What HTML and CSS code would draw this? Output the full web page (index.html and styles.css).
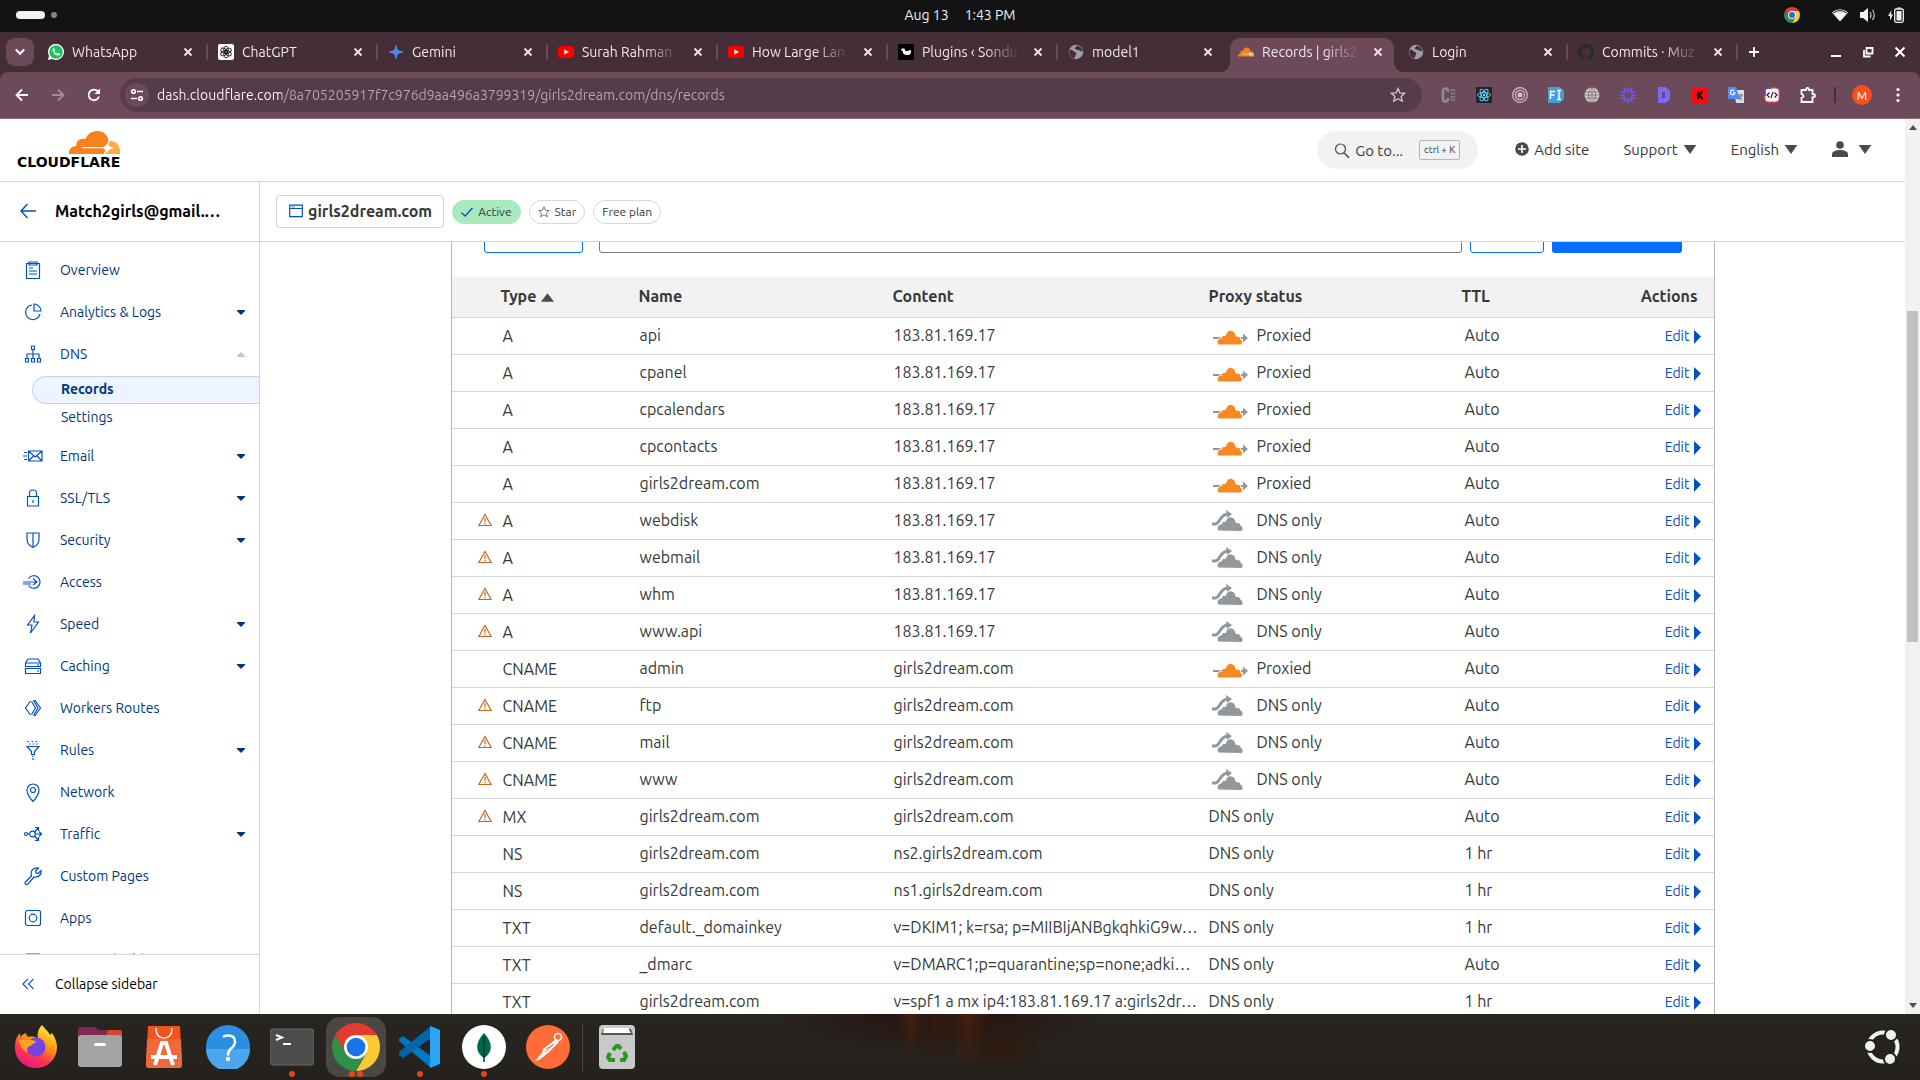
FILE: index.html
```html
<!DOCTYPE html>
<html lang="en">
<head>
<meta charset="utf-8">
<meta name="viewport" content="width=device-width, initial-scale=1">
<title>Records | girls2dream.com</title>
<link rel="stylesheet" href="styles.css">
</head>
<body>
<svg class="sprite" aria-hidden="true">
  <symbol id="x" viewBox="0 0 10 10"><path d="M1.5 1.5l7 7m0-7l-7 7" stroke="currentColor" stroke-width="1.8" fill="none"/></symbol>
  <symbol id="chrome" viewBox="4 4 40 40"><path fill="#e33b2e" d="M24 24V14H41.3A20 20 0 0 0 6.7 14L15.3 29z"/><path fill="#fcc934" d="M24 24V14H41.3A20 20 0 0 1 24 44L32.7 29z"/><path fill="#2d9147" d="M24 24L32.7 29 24 44A20 20 0 0 1 6.7 14L15.3 29z"/><circle cx="24" cy="24" r="10" fill="#fff"/><circle cx="24" cy="24" r="7.8" fill="#1a73e8"/></symbol>
  <symbol id="youtube" viewBox="0 0 16 16"><rect y="2" width="16" height="12" rx="3" fill="#f00"/><path d="M6.3 5.4v5.2L11 8z" fill="#fff"/></symbol>
  <symbol id="globe" viewBox="0 0 16 16"><circle cx="8" cy="8" r="7.2" fill="#9aa0a6"/><path d="M2 5.5c2 .2 3 1 4.500 2.600 1.500.4 2.500 1 1.500 2.400-.8 1-1 2-1.500 4C3 13.500 1 11 1.300 7.500zM8.500 2.500c-1.500 1-2.500 1.500-1.500 2.500 1.500.2 1.800 1.200 3.500 1 1.500.5 2 1.500 4 1.500-.3-3-2.500-5.500-6-6z" fill="#452e38"/></symbol>
  <symbol id="cf" viewBox="0 0 50 28"><path fill="#f6821f" d="M0 28c-.4-5.500 2.500-9.500 7.300-9.600C6.300 12 11 8.500 16 9.800 18.500 3.500 22.500 0 27.500 0c6.300 0 11 5.200 11 11.500 0 3-.6 5-1.300 6.900L34 28z"/><path fill="#fbad41" d="M40 12c6.500 0 11 7 10 16H35.500l2.500-7.500z"/><path fill="#fff" d="M13 19.600h20c2.500-.4 3.600-2.600 4.500-5 .9 3.600 2.300 5.200 7.500 6-4.300.6-6.600 2.200-7.500 6.400-.9-3.800-2.500-5.400-5-5.900H13z"/></symbol>
  <symbol id="down" viewBox="0 0 14 10"><path d="M0 0h14L7 10z" fill="currentColor"/></symbol>
  <symbol id="caret" viewBox="0 0 8 5"><path d="M0 0h8v1L4 5 0 1z" fill="currentColor"/></symbol>
  <symbol id="warn" viewBox="0 0 14 14"><path d="M7 1.500L13.200 12.500H.8z" fill="none" stroke="#c9651b" stroke-width="1.200"/><path d="M7 5v4M7 10v1.500" stroke="#c9651b" stroke-width="1.200"/></symbol>
  <symbol id="on" viewBox="0 0 40 24"><path d="M4 12h30v-3.500l5 4.500-5 4.500V14H4z" fill="#92979b"/><path d="M9 20c-2-3 0-7 3.500-7 .2-2 1.800-3 4-2.500C17.500 6.500 20 5 22.500 5.500c3 .6 4 3 4.500 5.500 3-.2 5 1 4.800 3.500 2.200.6 2 4.500.2 5.500z" fill="#f6891f" stroke="#fff"/></symbol>
  <symbol id="off" viewBox="0 0 40 24"><path d="M3 14h3c5 0 5-9.500 12-9.800h1" fill="none" stroke="#92979b" stroke-width="3"/><path d="M17 0l6 4-5 4.500z" fill="#92979b"/><path d="M9 21c-2-3 0-7 3.500-7 .2-2 1.800-3 4-2.500C17.500 7.500 20 6.500 22.500 7c3 .6 4 3 4.500 5.500 3-.2 5 1 4.800 3 3 .5 3 6 .2 6z" fill="#92979b" stroke="#fff"/></symbol>
  <symbol id="right" viewBox="0 0 8 14"><path d="M0 0l7 6.500L0 14z" fill="currentColor"/></symbol>
</svg>

<header class="topbar">
  <button class="spaces" aria-label="Activities"><span class="space-on"></span><span class="space"></span></button>
  <button class="clock"><span>Aug 13</span><span>1:43 PM</span></button>
  <div class="tray">
    <svg class="tray-chrome" viewBox="0 0 16 16"><use href="#chrome"/></svg>
    <svg viewBox="0 0 16 16"><path d="M0 5.500Q8-1 16 5.500L8 14.500z" fill="#f2f2f2"/><path d="M1.500 6Q8 1 14.500 6" fill="none" stroke="#131313"/></svg>
    <svg viewBox="0 0 16 16"><path d="M0 5h3l5-4v14l-5-4H0z" fill="#f2f2f2"/><path d="M10 5q2 3 0 6M12.500 3q3.500 5 0 10" stroke="#bbb" stroke-width="1.300" fill="none"/></svg>
    <svg viewBox="0 0 16 16"><path d="M3.500 3L0 9h2v4.500L5 7.500H3z" fill="#f2f2f2"/><rect x="6.700" y="2" width="8.600" height="13.300" rx="1.500" fill="none" stroke="#f2f2f2" stroke-width="1.300"/><path d="M9 .5h4v1H9zM8.500 4h5v9.500h-5z" fill="#f2f2f2"/></svg>
  </div>
</header>

<div class="tabstrip">
  <button class="tab-search" aria-label="Search tabs"><svg viewBox="0 0 10 10"><path d="M1.500 3L5 6.500 8.500 3" fill="none" stroke="#fff" stroke-width="1.800"/></svg></button>
  <div class="tabs">
    <div class="tab"><svg class="fav" viewBox="0 0 16 16"><path d="M0 16l1-4.200A8 8 0 1 1 4.300 15z" fill="#fff"/><circle cx="8" cy="8" r="6.800" fill="#1fc15b"/><path d="M5.200 4c-2.500 2.500 2.800 9 6.300 7.300 1.200-.8.800-1.800-1.500-2.500l-1 1C7.500 9.300 6.500 8 6.300 7.200l.8-1C6.500 4 6 3.700 5.200 4z" fill="#fff"/></svg><span class="title">WhatsApp</span><button class="close" aria-label="Close"><svg><use href="#x"/></svg></button></div>
    <div class="tab"><svg class="fav" viewBox="0 0 16 16"><rect width="16" height="16" rx="2" fill="#fff"/><g fill="none" stroke="#222" stroke-width=".9"><ellipse cx="8" cy="5.700" rx="2.300" ry="3.500"/><ellipse cx="8" cy="5.700" rx="2.300" ry="3.500" transform="rotate(60 8 8)"/><ellipse cx="8" cy="5.700" rx="2.300" ry="3.500" transform="rotate(120 8 8)"/><ellipse cx="8" cy="5.700" rx="2.300" ry="3.500" transform="rotate(180 8 8)"/><ellipse cx="8" cy="5.700" rx="2.300" ry="3.500" transform="rotate(240 8 8)"/><ellipse cx="8" cy="5.700" rx="2.300" ry="3.500" transform="rotate(300 8 8)"/></g></svg><span class="title">ChatGPT</span><button class="close" aria-label="Close"><svg><use href="#x"/></svg></button></div>
    <div class="tab"><svg class="fav" viewBox="0 0 16 16"><defs><linearGradient id="gem"><stop stop-color="#8a7bd0"/><stop offset=".5" stop-color="#4285f4"/><stop offset="1" stop-color="#45b2d8"/></linearGradient></defs><path d="M8 1.500Q8.500 7.500 14.500 8 8.500 8.500 8 14.500 7.500 8.500 1.500 8 7.500 7.500 8 1.500z" fill="url(#gem)" stroke="url(#gem)"/></svg><span class="title">Gemini</span><button class="close" aria-label="Close"><svg><use href="#x"/></svg></button></div>
    <div class="tab"><svg class="fav"><use href="#youtube"/></svg><span class="title">Surah Rahman</span><button class="close" aria-label="Close"><svg><use href="#x"/></svg></button></div>
    <div class="tab"><svg class="fav"><use href="#youtube"/></svg><span class="title">How Large Lan</span><button class="close" aria-label="Close"><svg><use href="#x"/></svg></button></div>
    <div class="tab"><svg class="fav" viewBox="0 0 16 16"><path d="M0 0h16v16H0z" fill="#000"/><path d="M3 6l1-1.500h2.500l.8 2.500h2L13 6c.5 3-1 5-3.500 5C6 11 4.500 9.500 5 7.500z" fill="#fff"/></svg><span class="title">Plugins ‹ Sondu</span><button class="close" aria-label="Close"><svg><use href="#x"/></svg></button></div>
    <div class="tab"><svg class="fav"><use href="#globe"/></svg><span class="title">model1</span><button class="close" aria-label="Close"><svg><use href="#x"/></svg></button></div>
    <div class="tab active"><svg class="fav"><use href="#cf"/></svg><span class="title">Records | girls2</span><button class="close" aria-label="Close"><svg><use href="#x"/></svg></button></div>
    <div class="tab"><svg class="fav"><use href="#globe"/></svg><span class="title">Login</span><button class="close" aria-label="Close"><svg><use href="#x"/></svg></button></div>
    <div class="tab"><svg class="fav" viewBox="0 0 16 16"><path fill="#24292e" d="M8 0a8 8 0 0 0-2.500 15.600c.4.100.500-.2.500-.4v-1.400c-2.200.5-2.700-1-2.700-1-.4-.9-.9-1.200-.9-1.200-.7-.5.100-.5.100-.5.800.1 1.200.8 1.200.8.700 1.300 1.900.9 2.300.7.100-.5.300-.9.500-1.100-1.800-.2-3.600-.9-3.600-4 0-.9.300-1.600.8-2.100-.1-.2-.4-1 .1-2.100 0 0 .7-.2 2.200.8a7.600 7.600 0 0 1 4 0c1.500-1 2.200-.8 2.200-.8.400 1.100.2 1.900.1 2.100.5.600.8 1.300.8 2.100 0 3.100-1.900 3.700-3.700 3.900.3.300.6.800.6 1.500v2.200c0 .2.100.500.600.4A8 8 0 0 0 8 0z"/></svg><span class="title">Commits · Muz</span><button class="close" aria-label="Close"><svg><use href="#x"/></svg></button></div>
  </div>
  <button class="icon-btn new-tab" aria-label="New tab"><svg viewBox="0 0 12 12"><path d="M6 1v10M1 6h10" stroke="#fff" stroke-width="1.800"/></svg></button>
  <div class="window-controls">
    <button class="icon-btn" aria-label="Minimize"><svg viewBox="0 0 12 12"><path d="M1 10h10" stroke="#fff" stroke-width="2"/></svg></button>
    <button class="icon-btn" aria-label="Restore"><svg viewBox="0 0 12 12"><path d="M4.500 2h6v5.500h-6zM2 4v6.500h6.500" fill="none" stroke="#fff" stroke-width="1.800"/></svg></button>
    <button class="icon-btn" aria-label="Close window"><svg viewBox="0 0 12 12"><path d="M1.500 1.500l9 9m0-9l-9 9" stroke="#fff" stroke-width="2"/></svg></button>
  </div>
</div>

<div class="toolbar">
  <button class="nav-btn" aria-label="Back"><svg viewBox="0 0 16 16"><path d="M14 8H3m5-5.500L2.500 8 8 13.500" fill="none" stroke="#fff" stroke-width="1.800"/></svg></button>
  <button class="nav-btn" aria-label="Forward"><svg viewBox="0 0 16 16"><path d="M2 8h11M8 2.500L13.500 8 8 13.500" fill="none" stroke="#a58a97" stroke-width="1.800"/></svg></button>
  <button class="nav-btn" aria-label="Reload"><svg viewBox="0 0 16 16"><path d="M13 9.500A5.300 5.300 0 1 1 12 4.500" fill="none" stroke="#fff" stroke-width="1.800"/><path d="M14 1.500v5.500H8.500z" fill="#fff"/></svg></button>
  <div class="omnibox">
    <button class="site-info" aria-label="Site information"><svg viewBox="0 0 14 14"><g fill="none" stroke="#fff" stroke-width="1.600"><circle cx="3.500" cy="3.500" r="1.800"/><circle cx="10.500" cy="10.500" r="1.800"/><path d="M7 3.500h6M1 10.500h6"/></g></svg></button>
    <input class="url" type="text" aria-label="Address" value="dash.cloudflare.com/8a705205917f7c976d9aa496a3799319/girls2dream.com/dns/records">
    <button class="icon-btn" aria-label="Bookmark"><svg class="s16" viewBox="0 0 16 16"><path d="M8 1.500l1.900 4.400 4.800.4-3.600 3.200 1.100 4.700L8 11.700l-4.200 2.500 1.100-4.700L1.300 6.300l4.800-.4z" fill="none" stroke="#d5c8ce" stroke-width="1.300"/></svg></button>
  </div>
  <div class="extensions">
    <svg viewBox="0 0 16 16"><path d="M8 5V4Q8 1.500 5.500 1.500T3 4v8q0 2.500 2.500 2.500T8 12v-1" fill="none" stroke="#948b90" stroke-width="2.600"/><path d="M11 3h1.500m1 0H15M11 6.500h1.500m1 0H15M11 10h1.500m1 0H15M11 13h1.500m1 0H15" stroke="#948b90" stroke-width="2"/></svg>
    <svg viewBox="0 0 16 16"><path d="M0 0h16v16H0z" fill="#20232a"/><g fill="none" stroke="#61dafb" stroke-width=".9"><ellipse cx="8" cy="8" rx="6.500" ry="2.500"/><ellipse cx="8" cy="8" rx="6.500" ry="2.500" transform="rotate(60 8 8)"/><ellipse cx="8" cy="8" rx="6.500" ry="2.500" transform="rotate(120 8 8)"/></g><circle cx="8" cy="8" r="1.200" fill="#61dafb"/></svg>
    <svg viewBox="0 0 16 16"><g fill="none" stroke="#cfc5ca" stroke-width="1.200"><circle cx="8" cy="8" r="7.300"/><circle cx="8" cy="8" r="4.600"/></g><circle cx="8" cy="8" r="2.500" fill="#cfc5ca"/></svg>
    <svg viewBox="0 0 16 16"><path d="M0 0h12l4 4v8l-4 4H0z" fill="#43a0dc"/><path d="M2.500 12V4.500h4.500M2.500 8h4M9 3.500h4M9 12.500h4M11 3.500v9" stroke="#fff" stroke-width="1.500" fill="none"/></svg>
    <svg viewBox="0 0 16 16"><circle cx="8" cy="8" r="7.500" fill="#d6d2d4"/><g fill="none" stroke="#7d6b74" stroke-width=".9"><ellipse cx="8" cy="8" rx="3.500" ry="7.500"/><path d="M8 0v16M1 5h14M1 8h15M1 11h14"/></g></svg>
    <svg viewBox="0 0 16 16"><path d="M11.500 8L16 8M11 9.800L14.900 12M9.800 11L12 14.900M8 11.500L8 16M6.200 11L4 14.900M5 9.800L1.100 12M4.500 8L0 8M5 6.200L1.100 4M6.200 5L4 1.100M8 4.500L8 0M9.800 5L12 1.100M11 6.200L14.900 4" stroke="#6a5cff" stroke-width="1.600"/></svg>
    <svg viewBox="0 0 16 16"><path d="M2 0h8l4 4v8l-4 4H2zM6 5v6h3V5z" fill="#7b68ff" fill-rule="evenodd"/></svg>
    <svg viewBox="0 0 16 16"><path d="M0 0h16v16H0z" fill="#f9080d"/><path d="M6 4v8M10.500 4L7 8l3.500 4" stroke="#1b0a12" stroke-width="2" fill="none"/></svg>
    <svg viewBox="0 0 16 16"><path d="M6 3h10v13H8z" fill="#dedede"/><path d="M0 0h8l4 12H0z" fill="#4f8df5"/><path d="M7 5.500H5M7 5.500a2.300 2.300 0 1 1-1-2" stroke="#fff" stroke-width="1.200" fill="none"/><path d="M10 8h5m-2.500-1v1m1.500 0q-1 4-3 5m0-4q1.500 3 3.500 4" stroke="#66798c" fill="none"/></svg>
    <svg viewBox="0 0 16 16"><rect x=".7" y=".7" width="14.600" height="14.600" rx="4" fill="#fff" stroke="#e33b4c" stroke-width="1.400"/><path d="M1 9V4q0-3 3-3h4" stroke="#4b45c6" stroke-width="1.400" fill="none"/><path d="M5.500 5.500L3 8l2.500 2.500m5-5L13 8l-2.500 2.500M9 5l-2 6" stroke="#222" fill="none" stroke-width="1.200"/></svg>
    <svg viewBox="0 0 16 16"><path d="M1.500 3H6q0-2 1.500-2T9 3h3.500v4Q15 7 15 8.700t-2.500 1.600V15h-11v-4q2-.5 2-2t-2-2z" fill="none" stroke="#fff" stroke-width="1.800"/></svg>
  </div>
  <span class="divider"></span>
  <button class="avatar" aria-label="Profile">M</button>
  <button class="icon-btn" aria-label="Menu"><svg class="s16" viewBox="0 0 16 16"><g fill="#fff"><circle cx="8" cy="2.500" r="1.600"/><circle cx="8" cy="8" r="1.600"/><circle cx="8" cy="13.500" r="1.600"/></g></svg></button>
</div>

<div class="viewport">
<div class="page">
  <header class="site-header">
    <a class="logo" href="#"><svg viewBox="0 0 50 28" preserveAspectRatio="none"><use href="#cf"/></svg><span>CLOUDFLARE</span></a>
    <div class="header-nav">
      <button class="goto"><svg viewBox="0 0 16 16"><circle cx="6.500" cy="7" r="5" fill="none" stroke="#4a4a4a" stroke-width="1.200"/><path d="M10 10.800l5 5" stroke="#4a4a4a" stroke-width="1.600"/></svg><span>Go to...</span><kbd>ctrl + K</kbd></button>
      <button class="hbtn"><svg class="plus" viewBox="0 0 14 14"><circle cx="7" cy="7" r="6.800" fill="#4a4a4a"/><path d="M7 3v8M3 7h8" stroke="#fff" stroke-width="1.600"/></svg>Add site</button>
      <button class="hbtn">Support<svg class="down"><use href="#down"/></svg></button>
      <button class="hbtn">English<svg class="down"><use href="#down"/></svg></button>
      <button class="hbtn user" aria-label="Account"><svg class="person" viewBox="0 0 16 16"><circle cx="8" cy="4" r="3.800" fill="#4a4a4a"/><path d="M0 16v-2.500C0 10.500 3.500 9 8 9s8 1.500 8 4.500V16z" fill="#4a4a4a"/></svg><svg class="down"><use href="#down"/></svg></button>
    </div>
  </header>

  <div class="body">
    <aside class="sidebar">
      <a class="account" href="#"><svg viewBox="0 0 16 16"><path d="M16 8H1m6.500-7L1 8l6.500 7" fill="none" stroke="#0051c3" stroke-width="1.400"/></svg><span>Match2girls@gmail.com</span></a>
      <nav class="menu">
        <a href="#"><svg viewBox="0 0 20 20"><path d="M3.500 3.500h13v15h-13zM6 2h8v3H6zM6 8h4M6 11h8M6 14h8"/></svg><span>Overview</span></a>
        <a href="#"><svg viewBox="0 0 20 20"><path d="M9 3a7.300 7.300 0 1 0 8 9M11 2v7h7a7 7 0 0 0-7-7z"/></svg><span>Analytics &amp; Logs</span><svg class="caret"><use href="#caret"/></svg></a>
        <a href="#"><svg viewBox="0 0 20 20"><path d="M8.500 2h3v3.500h-3zM2.500 14.500h3V18h-3zM8.500 14.500h3V18h-3zM14.500 14.500h3V18h-3zM10 6v8M4 14v-4h12v4"/></svg><span>DNS</span><svg class="caret open"><use href="#caret"/></svg></a>
        <div class="submenu"><a class="current" href="#">Records</a><a href="#">Settings</a></div>
        <a href="#"><svg viewBox="0 0 20 20"><path d="M5.500 5h13.500v10H5.500zM5.500 5l6.700 6L19 5M5.500 15l5-5M19 15l-5-5M1 6.500h3M0 10h4M1 13.500h3"/></svg><span>Email</span><svg class="caret"><use href="#caret"/></svg></a>
        <a href="#"><svg viewBox="0 0 20 20"><path d="M4.500 8.500h11V18h-11zM6.500 8V5q0-3 3.500-3t3.500 3v3M10 12v3"/></svg><span>SSL/TLS</span><svg class="caret"><use href="#caret"/></svg></a>
        <a href="#"><svg viewBox="0 0 20 20"><path d="M4 3h12v6q0 6-6 8.500Q4 15 4 9zM10 3v14"/></svg><span>Security</span><svg class="caret"><use href="#caret"/></svg></a>
        <a href="#"><svg viewBox="0 0 20 20"><path d="M5.500 6.500A6.300 6.300 0 1 1 5.500 13.500M0 10h14M0 12h8M10 6.500l4 3.500-4 3"/></svg><span>Access</span></a>
        <a href="#"><svg viewBox="0 0 20 20"><path d="M11.500 1.500L4.500 11H9l-1.500 8L15.500 8H11z"/></svg><span>Speed</span><svg class="caret"><use href="#caret"/></svg></a>
        <a href="#"><svg viewBox="0 0 20 20"><path d="M2.500 7l2.500-4h10l2.500 4v3.500h-15zM2.500 7h15M2.500 12.500h15v5h-15zM14 9h2M14 15h2"/></svg><span>Caching</span><svg class="caret"><use href="#caret"/></svg></a>
        <a href="#"><svg viewBox="0 0 20 20"><path d="M7.500 3l-5 7 5 7M8.500 3.500l4 6.500-4 6.500M10.500 2.500h1.500l5.500 7.500-5.500 7.500h-1.500M10.500 2.500l4.500 7.500-4.500 7.500"/></svg><span>Workers Routes</span></a>
        <a href="#"><svg viewBox="0 0 20 20"><path d="M4 6.500h12l-4.500 5v3h-3v-3zM4 1.500h1.500m3 0H10m2.500 0H14M6 4h1.500m2 0H11m2 0h1.500M10 15.500v1.500M10 18v2"/></svg><span>Rules</span><svg class="caret"><use href="#caret"/></svg></a>
        <a href="#"><svg viewBox="0 0 20 20"><path d="M10 19.500Q4 13 4 8a6 6 0 0 1 12 0q0 5-6 11.500z"/><circle cx="10" cy="8" r="2.500"/></svg><span>Network</span></a>
        <a href="#"><svg viewBox="0 0 20 20"><circle cx="3" cy="10" r="1.500"/><circle cx="9.500" cy="10" r="2.800"/><path d="M4.500 10h2M12.500 10H18M16 7.500l2.500 2.500-2.500 2.500M11.500 8L15 4M12 3.500h3.500V7M11.500 12l3.500 4M12 16.500h3.500V13"/></svg><span>Traffic</span><svg class="caret"><use href="#caret"/></svg></a>
        <a href="#"><svg viewBox="0 0 20 20"><path d="M2 16.500L8.500 10Q7 5 11 2.500q2-1 4.500-.5L12.500 5l.5 2 2 .5 3-3q.5 3-1.500 5-2 2-5.500 1.500L4.500 18.500Q2 19 2 16.500z"/></svg><span>Custom Pages</span></a>
        <a href="#"><svg viewBox="0 0 20 20"><rect x="2.500" y="2.500" width="15" height="15" rx="2"/><circle cx="10" cy="10" r="3.800"/></svg><span>Apps</span></a>
        <a href="#"><svg viewBox="0 0 20 20"><path d="M3.500 4h13v13h-13zM3.500 6h13"/></svg><span>Scrape Shield</span></a>
      </nav>
      <button class="collapse"><svg viewBox="0 0 14 12"><path d="M6.500.5L1 6l5.500 5.500M12.500.5L7 6l5.500 5.500" fill="none" stroke="#0051c3" stroke-width="1.200"/></svg>Collapse sidebar</button>
    </aside>

    <div class="content">
      <div class="zonebar">
        <button class="zone"><svg viewBox="0 0 14 14"><path d="M.7 1.200h12.600v11.500H.7zM.7 4.500h12.600M2.500 2.800h1m1 0h1" fill="none" stroke="#0051c3" stroke-width="1.200"/></svg>girls2dream.com</button>
        <span class="pill ok"><svg viewBox="0 0 12 12"><path d="M.5 6.500l3.500 3.500L11.500 2" fill="none" stroke="#0051c3" stroke-width="1.300"/></svg>Active</span>
        <button class="pill"><svg viewBox="0 0 12 12"><path d="M6 .8l1.500 3.500 3.800.3-2.900 2.500.9 3.700L6 8.800l-3.300 2 .9-3.700L.7 4.600l3.800-.3z" fill="none" stroke="#777"/></svg>Star</button>
        <span class="pill">Free plan</span>
      </div>
      <main class="scroller">
        <section class="card">
          <div class="filters">
            <button class="outline filter">Filter</button>
            <input class="search" type="search" aria-label="Search DNS Records">
            <button class="outline find">Search</button>
            <button class="primary">Add record</button>
          </div>
          <table class="records">
            <colgroup><col class="c-type"><col class="c-name"><col class="c-content"><col class="c-proxy"><col class="c-ttl"><col></colgroup>
            <thead><tr><th>Type <svg class="sort" viewBox="0 0 14 9"><path d="M7 0l7 9H0z" fill="#4a4a4a"/></svg></th><th>Name</th><th>Content</th><th>Proxy status</th><th>TTL</th><th>Actions</th></tr></thead>
            <tbody>
              <tr><td>A</td><td>api</td><td>183.81.169.17</td><td><svg><use href="#on"/></svg>Proxied</td><td>Auto</td><td><a href="#">Edit<svg><use href="#right"/></svg></a></td></tr>
              <tr><td>A</td><td>cpanel</td><td>183.81.169.17</td><td><svg><use href="#on"/></svg>Proxied</td><td>Auto</td><td><a href="#">Edit<svg><use href="#right"/></svg></a></td></tr>
              <tr><td>A</td><td>cpcalendars</td><td>183.81.169.17</td><td><svg><use href="#on"/></svg>Proxied</td><td>Auto</td><td><a href="#">Edit<svg><use href="#right"/></svg></a></td></tr>
              <tr><td>A</td><td>cpcontacts</td><td>183.81.169.17</td><td><svg><use href="#on"/></svg>Proxied</td><td>Auto</td><td><a href="#">Edit<svg><use href="#right"/></svg></a></td></tr>
              <tr><td>A</td><td>girls2dream.com</td><td>183.81.169.17</td><td><svg><use href="#on"/></svg>Proxied</td><td>Auto</td><td><a href="#">Edit<svg><use href="#right"/></svg></a></td></tr>
              <tr class="warned"><td><svg><use href="#warn"/></svg>A</td><td>webdisk</td><td>183.81.169.17</td><td><svg><use href="#off"/></svg>DNS only</td><td>Auto</td><td><a href="#">Edit<svg><use href="#right"/></svg></a></td></tr>
              <tr class="warned"><td><svg><use href="#warn"/></svg>A</td><td>webmail</td><td>183.81.169.17</td><td><svg><use href="#off"/></svg>DNS only</td><td>Auto</td><td><a href="#">Edit<svg><use href="#right"/></svg></a></td></tr>
              <tr class="warned"><td><svg><use href="#warn"/></svg>A</td><td>whm</td><td>183.81.169.17</td><td><svg><use href="#off"/></svg>DNS only</td><td>Auto</td><td><a href="#">Edit<svg><use href="#right"/></svg></a></td></tr>
              <tr class="warned"><td><svg><use href="#warn"/></svg>A</td><td>www.api</td><td>183.81.169.17</td><td><svg><use href="#off"/></svg>DNS only</td><td>Auto</td><td><a href="#">Edit<svg><use href="#right"/></svg></a></td></tr>
              <tr><td>CNAME</td><td>admin</td><td>girls2dream.com</td><td><svg><use href="#on"/></svg>Proxied</td><td>Auto</td><td><a href="#">Edit<svg><use href="#right"/></svg></a></td></tr>
              <tr class="warned"><td><svg><use href="#warn"/></svg>CNAME</td><td>ftp</td><td>girls2dream.com</td><td><svg><use href="#off"/></svg>DNS only</td><td>Auto</td><td><a href="#">Edit<svg><use href="#right"/></svg></a></td></tr>
              <tr class="warned"><td><svg><use href="#warn"/></svg>CNAME</td><td>mail</td><td>girls2dream.com</td><td><svg><use href="#off"/></svg>DNS only</td><td>Auto</td><td><a href="#">Edit<svg><use href="#right"/></svg></a></td></tr>
              <tr class="warned"><td><svg><use href="#warn"/></svg>CNAME</td><td>www</td><td>girls2dream.com</td><td><svg><use href="#off"/></svg>DNS only</td><td>Auto</td><td><a href="#">Edit<svg><use href="#right"/></svg></a></td></tr>
              <tr class="warned"><td><svg><use href="#warn"/></svg>MX</td><td>girls2dream.com</td><td>girls2dream.com</td><td>DNS only</td><td>Auto</td><td><a href="#">Edit<svg><use href="#right"/></svg></a></td></tr>
              <tr><td>NS</td><td>girls2dream.com</td><td>ns2.girls2dream.com</td><td>DNS only</td><td>1 hr</td><td><a href="#">Edit<svg><use href="#right"/></svg></a></td></tr>
              <tr><td>NS</td><td>girls2dream.com</td><td>ns1.girls2dream.com</td><td>DNS only</td><td>1 hr</td><td><a href="#">Edit<svg><use href="#right"/></svg></a></td></tr>
              <tr><td>TXT</td><td>default._domainkey</td><td>v=DKIM1; k=rsa; p=MIIBIjANBgkqhkiG9w…</td><td>DNS only</td><td>1 hr</td><td><a href="#">Edit<svg><use href="#right"/></svg></a></td></tr>
              <tr><td>TXT</td><td>_dmarc</td><td>v=DMARC1;p=quarantine;sp=none;adki…</td><td>DNS only</td><td>Auto</td><td><a href="#">Edit<svg><use href="#right"/></svg></a></td></tr>
              <tr><td>TXT</td><td>girls2dream.com</td><td>v=spf1 a mx ip4:183.81.169.17 a:girls2dr…</td><td>DNS only</td><td>1 hr</td><td><a href="#">Edit<svg><use href="#right"/></svg></a></td></tr>
            </tbody>
          </table>
        </section>
      </main>
    </div>
  </div>
</div>
<div class="scrollbar" aria-hidden="true">
  <svg viewBox="0 0 8 5"><path d="M4 0l4 5H0z" fill="#505050"/></svg>
  <div class="track"><span class="before"></span><span class="thumb"></span><span class="after"></span></div>
  <svg viewBox="0 0 8 5"><path d="M0 0h8L4 5z" fill="#505050"/></svg>
</div>
</div>

<footer class="dock">
  <button class="app" aria-label="Firefox"><svg viewBox="0 0 44 44"><defs><linearGradient id="ff" x1=".8" y1="0" x2=".3" y2="1"><stop stop-color="#fff44f"/><stop offset=".4" stop-color="#ff980e"/><stop offset=".7" stop-color="#ff3750"/><stop offset="1" stop-color="#e31587"/></linearGradient></defs><path d="M28 0c3 4 6 6 8 10l2-2c3 5 5 9 5 14 0 12-9 21-21 21S1 34 1 23c0-6 1-11 5-15v4c1-1 3-3 6-4 0 2 1 3 3 4 4-1 7 0 9 2-1-5 0-10 4-14z" fill="url(#ff)"/><circle cx="22" cy="22" r="9.500" fill="#7542e5"/><path d="M5 15c6-1 14-1 18 2-3 0-4 3-7 4s-4 4-2 7c-5-2-8-7-9-13z" fill="#ffa21f"/></svg></button>
  <button class="app" aria-label="Files"><svg viewBox="0 0 44 44"><path d="M0 36V4q0-2 2-2h15l4 3h21q2 0 2 2v16z" fill="#7d2a4e"/><path d="M30 5h12q2 0 2 2v10H26z" fill="#d4482a"/><rect y="10" width="44" height="32" rx="3" fill="#a3a3a3"/><rect x="16" y="18" width="12" height="3" rx="1.500" fill="#fff"/></svg></button>
  <button class="app" aria-label="App Center"><svg viewBox="0 0 44 44"><path d="M6 1h32l2 39q0 3-3 3H7q-3 0-3-3z" fill="#f2541e"/><path d="M5 14h34l1 26q0 3-3 3H7q-3 0-3-3z" fill="#ee6a3a"/><path d="M14 3q0 10 8 10t8-10" fill="none" stroke="#f7efe9" stroke-width="1.500"/><path d="M13 40l7-22h4l7 22" fill="none" stroke="#fff" stroke-width="4"/><path d="M9 32h26" stroke="#fff" stroke-width="4"/></svg></button>
  <button class="app" aria-label="Help"><svg viewBox="0 0 44 44"><circle cx="22" cy="22" r="22" fill="#2a8fe3"/><path d="M0 24h44a22 22 0 0 1-44 0z" fill="#4aa7ec"/><path d="M17 12q2-1.500 5-1.500 7 0 7 6 0 4-4 7-3 2.500-3 7" fill="none" stroke="#fff" stroke-width="2.500"/><circle cx="22" cy="34" r="2.200" fill="#fff"/></svg></button>
  <button class="app one" aria-label="Terminal"><svg viewBox="0 0 44 44"><rect y="4" width="44" height="36" rx="3" fill="#4c4c4c" stroke="#686868"/><path d="M6 10l6 2.500L6 15M13 19h8" fill="none" stroke="#fff" stroke-width="2"/></svg></button>
  <button class="app two focused" aria-label="Google Chrome"><svg class="big"><use href="#chrome"/></svg></button>
  <button class="app one" aria-label="Visual Studio Code"><svg viewBox="0 0 44 44"><path d="M1 14l4-3 28 20v12L1 16z" fill="#0078c8"/><path d="M33 1v12L5 33l-4-3v-3z" fill="#0065a9"/><path d="M32 1l10 4v34l-10 4z" fill="#2aa4f4"/></svg></button>
  <button class="app one" aria-label="MongoDB Compass"><svg viewBox="0 0 44 44"><circle cx="22" cy="22" r="22" fill="#fff"/><path d="M22 8c-10 11-8 20 0 25 8-5 10-14 0-25z" fill="#00684a"/><path d="M22 12v25" stroke="#023430" stroke-width="1.500"/></svg></button>
  <button class="app" aria-label="Postman"><svg viewBox="0 0 44 44"><circle cx="22" cy="22" r="22" fill="#ff6c37"/><circle cx="32" cy="12" r="3.500" fill="none" stroke="#fff" stroke-width="1.500"/><path d="M30 14L17 24l-1 4-7 8 4-1 9-7 11-11z" fill="#fff"/><path d="M20 24l8-5M19 27l8-7" stroke="#ff6c37"/></svg></button>
  <span class="dock-sep"></span>
  <button class="app" aria-label="Trash"><svg viewBox="0 0 44 44"><rect x="4" width="36" height="44" rx="4" fill="#c9c9c9"/><path d="M8 4h28l2 6H6z" fill="#555"/><path d="M9 3h24l3 5H8z" fill="#fff"/><g fill="none" stroke="#2e9425" stroke-width="4"><path d="M18 25l3.500-4h2L26 24M29 27l2 4-2 4h-4M20 35h-5l-2-3 2-4"/></g></svg></button>
  <button class="show-apps" aria-label="Show applications"><svg viewBox="0 0 36 36"><circle cx="18" cy="18" r="14.500" fill="none" stroke="#f2f2f2" stroke-width="4"/><g fill="#f2f2f2" stroke="#25211d" stroke-width="2"><circle cx="5" cy="17" r="6"/><circle cx="26" cy="6" r="6"/><circle cx="25" cy="30" r="6"/></g></svg></button>
</footer>
</body>
</html>
```
FILE: styles.css
```css
* { box-sizing: border-box; }
body { margin: 0; height: 100vh; display: flex; flex-direction: column; overflow: hidden; background: #25211d; font-family: Ubuntu, "Noto Sans", sans-serif; font-size: 16px; color: #36393a; }
button { border: 0; padding: 0; background: none; font: inherit; color: inherit; display: flex; align-items: center; justify-content: center; }
a { color: inherit; text-decoration: none; }
svg { display: block; flex: none; }
.sprite { display: none; }

.topbar { flex: none; height: 32px; background: #131313; color: #f2f2f2; display: grid; grid-template-columns: 1fr auto 1fr; align-items: center; padding: 0 16px 2px; font-size: 14px; }
.spaces { justify-self: start; gap: 6px; }
.space-on { width: 29px; height: 8px; border-radius: 4px; background: #f2f2f2; }
.space { width: 6px; height: 6px; border-radius: 3px; background: #858585; }
.clock { gap: 16px; }
.tray { justify-self: end; display: flex; gap: 12px; }
.tray svg { width: 16px; height: 16px; }
.tray-chrome { margin-right: 20px; }

.tabstrip { flex: none; height: 40px; background: #452e38; color: #f0e8ec; display: flex; align-items: center; padding: 0 4px 0 6px; font-size: 14px; }
.tab-search { width: 28px; height: 28px; border-radius: 9px; background: #6d4a5a; }
.tab-search svg { width: 12px; height: 12px; }
.tabs { flex: 0 1 1700px; min-width: 0; display: flex; margin-left: 4px; align-self: stretch; }
.tab { flex: 1 1 0; min-width: 0; display: flex; align-items: center; margin-top: 6px; padding: 0 10px 6px; position: relative; }
.tab::after { content: ""; position: absolute; right: 0; top: 6px; width: 2px; height: 16px; background: #6d4a5a; }
.tab.active::after, .tab:has(+ .active)::after { background: none; }
.fav { width: 16px; height: 16px; }
.title { flex: 1; min-width: 0; margin-left: 8px; overflow: hidden; white-space: nowrap; mask-image: linear-gradient(to right, #000 calc(100% - 36px), transparent); }
.close { width: 20px; height: 20px; margin-left: 8px; }
.close svg { width: 10px; height: 10px; }
.tab.active { margin: 6px 4px 0 2px; padding: 0 6px 6px 8px; background: #6d4a5a; border-radius: 10px 10px 0 0; }
.tab.active::before { content: ""; position: absolute; left: -10px; right: -10px; bottom: 0; height: 10px; background: radial-gradient(circle at 0 0, transparent 10px, #6d4a5a 10px) left / 10px 10px no-repeat, radial-gradient(circle at 100% 0, transparent 10px, #6d4a5a 10px) right / 10px 10px no-repeat; }
.icon-btn { width: 32px; height: 32px; }
.icon-btn svg { width: 12px; height: 12px; }
.icon-btn .s16 { width: 16px; height: 16px; }
.window-controls { margin-left: auto; display: flex; }

.toolbar { flex: none; height: 47px; background: #6d4a5a; border-bottom: 1px solid #8b6f7d; border-radius: 8px 8px 0 0; box-shadow: 0 -8px 0 #452e38; clip-path: inset(0); display: flex; align-items: center; padding: 0 6px 0 4px; }
.nav-btn { width: 36px; height: 36px; }
.nav-btn svg { width: 16px; height: 16px; }
.omnibox { flex: 1; min-width: 0; height: 34px; margin-left: 8px; padding: 0 8px 0 5px; border-radius: 17px; background: #543d49; display: flex; align-items: center; }
.site-info { width: 24px; height: 24px; border-radius: 12px; background: #6d4a5a; }
.site-info svg { width: 14px; height: 14px; }
.url { flex: 1; min-width: 0; height: 24px; margin-left: 8px; padding: 0; border: 0; outline: 0; font: inherit; font-size: 14px; color: transparent; background: linear-gradient(to right, #fff 125px, #b9a9b1 125px); background-clip: text; }
.extensions { display: flex; gap: 20px; margin-left: 18px; }
.extensions svg { width: 16px; height: 16px; }
.divider { width: 2px; height: 16px; margin: 0 16px 0 18px; background: #452e38; }
.avatar { width: 20px; height: 20px; margin-right: 10px; border-radius: 10px; background: #f4511e; color: #fff; font-size: 12px; }

.viewport { flex: 1; min-height: 0; display: flex; background: #fff; }
.page { flex: 1; min-width: 0; display: flex; flex-direction: column; }
.site-header { flex: none; height: 63px; border-bottom: 1px solid #d5d7d8; display: flex; align-items: center; justify-content: space-between; padding: 0 33px 0 17px; }
.logo { display: flex; flex-direction: column; color: #000; font: 700 14px/16px "DejaVu Sans", sans-serif; }
.logo svg { width: 51px; height: 23px; align-self: flex-end; }
.header-nav { display: flex; align-items: center; font-size: 15px; }
.goto { height: 38px; padding: 0 18px 0 17px; margin-right: 37px; border-radius: 19px; background: #f2f2f2; }
.goto svg { width: 16px; height: 16px; margin-right: 5px; }
kbd { margin-left: 16px; height: 20px; padding: 0 4px; border: 1px solid #b6b6b6; border-radius: 2px; font: 10px/18px Ubuntu, "Noto Sans", sans-serif; }
.hbtn { gap: 5px; margin-right: 34px; padding-bottom: 2px; }
.hbtn.user { gap: 10px; margin-right: 0; }
.plus { width: 14px; height: 14px; }
.down { width: 14px; height: 9px; color: #4a4a4a; }
.person { width: 16px; height: 16px; }

.body { flex: 1; min-height: 0; display: flex; }
.sidebar { flex: none; width: 260px; border-right: 1px solid #d5d7d8; display: flex; flex-direction: column; }
.account { flex: none; height: 60px; border-bottom: 1px solid #d5d7d8; display: flex; align-items: center; gap: 19px; padding: 0 38px 2px 20px; color: #000; font-weight: 600; }
.account svg { width: 16px; height: 16px; }
.account span { overflow: hidden; text-overflow: ellipsis; white-space: nowrap; }
.menu { flex: 1; min-height: 0; overflow: hidden; padding-top: 7px; color: #003681; font-size: 14px; }
.menu > a { height: 42px; display: flex; align-items: center; gap: 17px; padding: 0 14px 0 23px; }
.menu > a svg { width: 20px; height: 20px; fill: none; stroke: #0051c3; stroke-width: 1.2; }
.menu > a .caret { width: 8px; height: 5px; margin-left: auto; stroke: none; color: #003681; }
.menu > a .open { transform: rotate(180deg); color: #bcc7dc; }
.submenu { padding: 1px 0 3px 32px; }
.submenu a { height: 28px; display: flex; align-items: center; padding: 0 0 2px 28px; border: 1px solid transparent; border-right: 0; }
.submenu .current { border-color: #b9d6ff; border-radius: 14px 0 0 14px; background: #ebf4ff; font-weight: 600; }
.collapse { flex: none; height: 60px; border-top: 1px solid #d5d7d8; justify-content: flex-start; gap: 20px; padding: 0 0 2px 22px; color: #000; font-size: 14px; }
.collapse svg { width: 13px; height: 12px; }

.content { flex: 1; min-width: 0; display: flex; flex-direction: column; }
.zonebar { flex: none; height: 60px; border-bottom: 1px solid #d5d7d8; display: flex; align-items: center; gap: 8px; padding-left: 16px; }
.zone { height: 33px; padding: 0 11px 1px 12px; gap: 5px; border: 1px solid #d5d7d8; border-radius: 3px; font-weight: 600; }
.zone svg { width: 14px; height: 14px; }
.pill { height: 24px; padding: 0 8px; gap: 5px; border: 1px solid #d5d7d8; border-radius: 12px; display: flex; align-items: center; font-size: 12px; }
.pill svg { width: 12px; height: 12px; }
.pill.ok { background: #a8e9c0; border-color: #a8e9c0; }
.scroller { flex: 1; min-height: 0; overflow: hidden; display: flex; flex-direction: column; align-items: center; }
.card { flex: none; width: 100%; max-width: 1264px; border: solid #b6b6b6; border-width: 0 1px; }
.filters { display: flex; gap: 8px; margin-top: -28px; padding: 0 32px 24px; }
.filters button, .search { height: 39px; border-radius: 3px; }
.outline { border: 1px solid #056dff; color: #0051c3; }
.filter { width: 99px; margin-right: 8px; }
.find { width: 74px; }
.search { flex: 1; min-width: 0; border: 1px solid #797979; background: #fff; }
.primary { width: 130px; background: #056dff; color: #fff; }

.records { width: 100%; table-layout: fixed; border-collapse: separate; border-spacing: 0; }
.c-type { width: 187px; }
.c-name { width: 254px; }
.c-content { width: 316px; }
.c-proxy { width: 253px; }
.c-ttl { width: 130px; }
.records th { height: 41px; padding: 0 0 2px; background: #f2f2f2; border-bottom: 1px solid #d5d7d8; text-align: left; font-weight: 600; line-height: 20px; }
.records th:first-child { padding-left: 49px; }
.records th:last-child { text-align: right; padding-right: 16px; }
.sort { display: inline-block; width: 13px; height: 9px; margin-left: 1px; }
.records td { height: 37px; padding: 0 0 2px; border-bottom: 1px solid #d5d7d8; line-height: 20px; white-space: nowrap; overflow: hidden; }
.records td:first-child { padding: 0 0 0 51px; }
.records td svg { display: inline-block; vertical-align: middle; }
.records .warned td:first-child { padding-left: 26px; }
.records td:first-child svg { width: 14px; height: 14px; margin: 0 11px 4px 0; }
.records td:nth-child(2), .records td:nth-child(3) { padding-left: 1px; }
.records td:nth-child(4) svg { width: 40px; height: 24px; margin: -4px 8px -4px 0; }
.records td:nth-child(5) { padding-left: 3px; }
.records td:last-child { text-align: right; padding: 0 12px 0 0; font-size: 14px; color: #0051c3; }
.records td:last-child svg { width: 8px; height: 14px; margin-left: 4px; }

.scrollbar { flex: none; width: 15px; background: #f1f1f1; display: flex; flex-direction: column; align-items: center; justify-content: space-between; padding: 6px 0; }
.scrollbar svg { width: 8px; height: 5px; }
.track { flex: 1; width: 11px; display: flex; flex-direction: column; padding: 6px 0; }
.before { flex: 175; }
.thumb { flex: 331; background: #c1c1c1; }
.after { flex: 355; }

.dock { flex: none; height: 66px; display: flex; align-items: center; gap: 4px; padding: 0 19px 0 6px; background: radial-gradient(ellipse 14px 46px at 911px 0, #43200d, transparent), radial-gradient(ellipse 16px 52px at 938px 0, #351b10, transparent), radial-gradient(ellipse 20px 56px at 968px 0, #43200d, transparent), radial-gradient(ellipse 50px 20px at 1000px 36px, #301a10, transparent), radial-gradient(ellipse 160px 40px at 940px 0, #281815 40%, transparent), linear-gradient(#28241f, #25211d); }
.app { position: relative; width: 60px; height: 60px; border-radius: 14px; }
.app svg { width: 44px; height: 44px; }
.app .big { width: 48px; height: 48px; }
.focused { background: #4b4743; }
.one::after, .two::after { content: ""; position: absolute; left: 27px; bottom: 0; width: 6px; height: 6px; border-radius: 3px; background: #e0481c; }
.two::after { left: 23px; box-shadow: 8px 0 #e0481c; }
.dock-sep { width: 1px; height: 48px; background: #4b4743; }
.show-apps { margin-left: auto; }
.show-apps svg { width: 36px; height: 36px; }
```
